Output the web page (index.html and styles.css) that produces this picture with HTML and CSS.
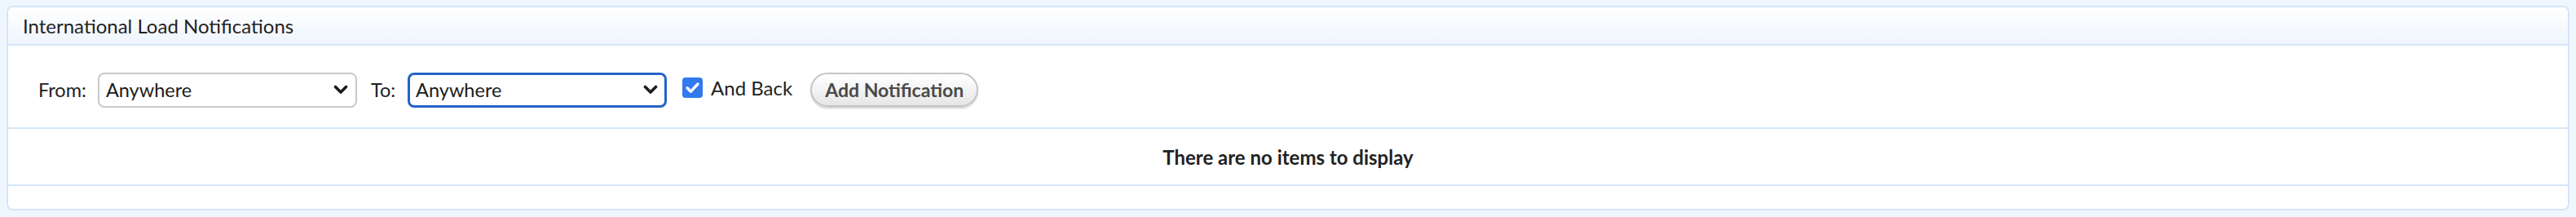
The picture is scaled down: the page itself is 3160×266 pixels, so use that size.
FILE: index.html
```html
<!DOCTYPE html>
<html lang="en">
<head>
<meta charset="utf-8">
<title>International Load Notifications</title>
<link rel="stylesheet" href="styles.css">
</head>
<body>
<div class="panel">
  <div class="panel-header">International Load Notifications</div>
  <div class="controls">
    <span class="lbl lbl-from">From:</span>
    <div class="select">
      <span class="select-value">Anywhere</span>
      <svg class="chev" width="18" height="12" viewBox="0 0 18 12"><path d="M2.5 2.5 L9 9 L15.5 2.5" fill="none" stroke="#1c1c1c" stroke-width="3.6" stroke-linecap="round" stroke-linejoin="round"/></svg>
    </div>
    <span class="lbl lbl-to">To:</span>
    <div class="select focused">
      <span class="select-value">Anywhere</span>
      <svg class="chev" width="18" height="12" viewBox="0 0 18 12"><path d="M2.5 2.5 L9 9 L15.5 2.5" fill="none" stroke="#1c1c1c" stroke-width="3.6" stroke-linecap="round" stroke-linejoin="round"/></svg>
    </div>
    <span class="checkbox">
      <svg width="25" height="25" viewBox="0 0 25 25"><path d="M6 12.8 L10.4 17.2 L19 8" fill="none" stroke="#fff" stroke-width="3.4" stroke-linecap="round" stroke-linejoin="round"/></svg>
    </span>
    <span class="and-back">And Back</span>
    <button class="btn" type="button">Add Notification</button>
  </div>
  <div class="empty">There are no items to display</div>
  <div class="footer"></div>
</div>
</body>
</html>
```

FILE: styles.css
```css
html, body {
  margin: 0;
  padding: 0;
  background: #eff6fe;
}
body {
  padding: 7px 8px 0 8px;
  font-family: "Lato", "Open Sans", "Liberation Sans", sans-serif;
  color: #222;
}
.panel {
  background: #fff;
  border: 2px solid #d5e6f9;
  border-radius: 8px;
  overflow: hidden;
}
.panel-header {
  height: 47px;
  box-sizing: border-box;
  padding: 0 0 0 18px;
  display: flex;
  align-items: center;
  font-size: 24px;
  color: #222;
  background: linear-gradient(#ffffff, #eef5fd);
  border-bottom: 2px solid #d5e6f9;
}
.controls {
  height: 102px;
  box-sizing: border-box;
  display: flex;
  align-items: center;
  padding-left: 37px;
  padding-top: 8px;
  border-bottom: 2px solid #d5e6f9;
  font-size: 23.5px;
}
.lbl {
  color: #222;
}
.lbl-from { margin-right: 14px; }
.lbl-to { margin-left: 17px; margin-right: 15px; }
.select {
  width: 318px;
  height: 43px;
  box-sizing: border-box;
  border: 2px solid #c9c9c9;
  border-radius: 8px;
  display: flex;
  align-items: center;
  justify-content: space-between;
  padding: 0 9px 0 8px;
  background: #fff;
}
.select.focused {
  border: 3px solid #2563c7;
  padding: 0 8px 0 7px;
}
.select-value {
  color: #1c1c1c;
  font-size: 23.5px;
}
.chev { display: block; }
.checkbox {
  width: 25px;
  height: 25px;
  border-radius: 4px;
  background: #3179ef;
  margin-left: 19px;
  margin-top: -6px;
  display: flex;
}
.checkbox svg { display: block; }
.and-back {
  margin-left: 10px;
  margin-top: -6px;
  font-size: 24px;
}
.btn {
  margin-left: 22px;
  width: 206px;
  height: 42px;
  border: 2px solid #c4c4c4;
  border-radius: 21px;
  background: linear-gradient(#ffffff, #f2f2f2 55%, #e6e6e6);
  box-shadow: 0 2px 2px rgba(0,0,0,0.18);
  font-family: "Lato", "Open Sans", "Liberation Sans", sans-serif;
  font-weight: 700;
  font-size: 23px;
  color: #4a4a4a;
  padding: 0;
}
.empty {
  height: 70px;
  box-sizing: border-box;
  display: flex;
  align-items: center;
  justify-content: center;
  font-weight: 700;
  font-size: 24px;
  color: #222;
  border-bottom: 2px solid #d5e6f9;
}
.footer {
  height: 28px;
}
```
